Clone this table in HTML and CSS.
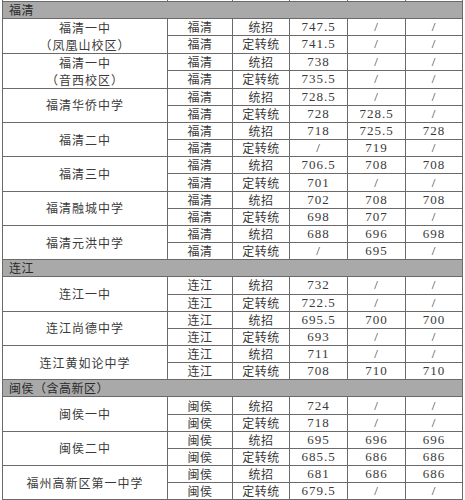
FILE: index.html
```html
<!DOCTYPE html>
<html lang="zh-CN">
<head>
<meta charset="utf-8">
<title>分数线</title>
<link rel="stylesheet" href="styles.css">
</head>
<body>
<table class="sheet">
  <colgroup>
    <col class="c-school"><col class="c-area"><col class="c-type"><col class="c-n"><col class="c-n"><col class="c-n3">
  </colgroup>
  <tbody>
    <tr class="cut"><td></td><td></td><td></td><td></td><td></td><td></td></tr>

    <tr class="region"><td colspan="6">福清</td></tr>
    <tr><td class="school two" rowspan="2">福清一中<br>（凤凰山校区）</td><td>福清</td><td>统招</td><td class="num">747.5</td><td class="num">/</td><td class="num">/</td></tr>
    <tr><td>福清</td><td>定转统</td><td class="num">741.5</td><td class="num">/</td><td class="num">/</td></tr>
    <tr><td class="school two" rowspan="2">福清一中<br>（音西校区）</td><td>福清</td><td>统招</td><td class="num">738</td><td class="num">/</td><td class="num">/</td></tr>
    <tr><td>福清</td><td>定转统</td><td class="num">735.5</td><td class="num">/</td><td class="num">/</td></tr>
    <tr><td class="school" rowspan="2">福清华侨中学</td><td>福清</td><td>统招</td><td class="num">728.5</td><td class="num">/</td><td class="num">/</td></tr>
    <tr><td>福清</td><td>定转统</td><td class="num">728</td><td class="num">728.5</td><td class="num">/</td></tr>
    <tr><td class="school" rowspan="2">福清二中</td><td>福清</td><td>统招</td><td class="num">718</td><td class="num">725.5</td><td class="num">728</td></tr>
    <tr><td>福清</td><td>定转统</td><td class="num">/</td><td class="num">719</td><td class="num">/</td></tr>
    <tr><td class="school" rowspan="2">福清三中</td><td>福清</td><td>统招</td><td class="num">706.5</td><td class="num">708</td><td class="num">708</td></tr>
    <tr><td>福清</td><td>定转统</td><td class="num">701</td><td class="num">/</td><td class="num">/</td></tr>
    <tr><td class="school" rowspan="2">福清融城中学</td><td>福清</td><td>统招</td><td class="num">702</td><td class="num">708</td><td class="num">708</td></tr>
    <tr><td>福清</td><td>定转统</td><td class="num">698</td><td class="num">707</td><td class="num">/</td></tr>
    <tr><td class="school" rowspan="2">福清元洪中学</td><td>福清</td><td>统招</td><td class="num">688</td><td class="num">696</td><td class="num">698</td></tr>
    <tr><td>福清</td><td>定转统</td><td class="num">/</td><td class="num">695</td><td class="num">/</td></tr>

    <tr class="region"><td colspan="6">连江</td></tr>
    <tr><td class="school" rowspan="2">连江一中</td><td>连江</td><td>统招</td><td class="num">732</td><td class="num">/</td><td class="num">/</td></tr>
    <tr><td>连江</td><td>定转统</td><td class="num">722.5</td><td class="num">/</td><td class="num">/</td></tr>
    <tr><td class="school" rowspan="2">连江尚德中学</td><td>连江</td><td>统招</td><td class="num">695.5</td><td class="num">700</td><td class="num">700</td></tr>
    <tr><td>连江</td><td>定转统</td><td class="num">693</td><td class="num">/</td><td class="num">/</td></tr>
    <tr><td class="school" rowspan="2">连江黄如论中学</td><td>连江</td><td>统招</td><td class="num">711</td><td class="num">/</td><td class="num">/</td></tr>
    <tr><td>连江</td><td>定转统</td><td class="num">708</td><td class="num">710</td><td class="num">710</td></tr>

    <tr class="region"><td colspan="6">闽侯（含高新区）</td></tr>
    <tr><td class="school" rowspan="2">闽侯一中</td><td>闽侯</td><td>统招</td><td class="num">724</td><td class="num">/</td><td class="num">/</td></tr>
    <tr><td>闽侯</td><td>定转统</td><td class="num">718</td><td class="num">/</td><td class="num">/</td></tr>
    <tr><td class="school" rowspan="2">闽侯二中</td><td>闽侯</td><td>统招</td><td class="num">695</td><td class="num">696</td><td class="num">696</td></tr>
    <tr><td>闽侯</td><td>定转统</td><td class="num">685.5</td><td class="num">686</td><td class="num">686</td></tr>
    <tr><td class="school" rowspan="2">福州高新区第一中学</td><td>闽侯</td><td>统招</td><td class="num">681</td><td class="num">686</td><td class="num">686</td></tr>
    <tr><td>闽侯</td><td>定转统</td><td class="num">679.5</td><td class="num">/</td><td class="num">/</td></tr>
  </tbody>
</table>
</body>
</html>
```

FILE: styles.css
```css
html, body {
  margin: 0;
  padding: 0;
  background: #ffffff;
  overflow: hidden;
}

.sheet {
  border-collapse: collapse;
  table-layout: fixed;
  width: 461px;
  margin-left: 2px;
  font-family: "Noto Sans CJK SC", "Noto Sans CJK JP", sans-serif;
  font-size: 12px;
  color: #3a3a3a;
}

.c-school { width: 165px; }
.c-area { width: 65px; }
.c-type { width: 57px; }
.c-n { width: 58px; }
.c-n3 { width: 57px; }

.sheet tr {
  height: 17.17px;
}

.sheet td {
  border: 1px solid #6a6a6a;
  padding: 0;
  text-align: center;
  vertical-align: middle;
  line-height: 14px;
  white-space: nowrap;
  overflow: hidden;
  letter-spacing: 0.5px;
}

.sheet tr.cut {
  height: 1px;
}

.sheet tr.cut td {
  border-top: 0;
  font-size: 0;
  line-height: 0;
  height: 0;
}

.sheet tr.region td {
  background: #a9a9a9;
  text-align: left;
  padding-left: 6px;
  color: #2a2a2a;
}

.sheet td.school {
  letter-spacing: 1px;
}

.sheet td.school.two {
  line-height: 17px;
}

.sheet td.num {
  font-family: "Liberation Serif", serif;
  font-size: 13px;
  letter-spacing: 1px;
}
```
